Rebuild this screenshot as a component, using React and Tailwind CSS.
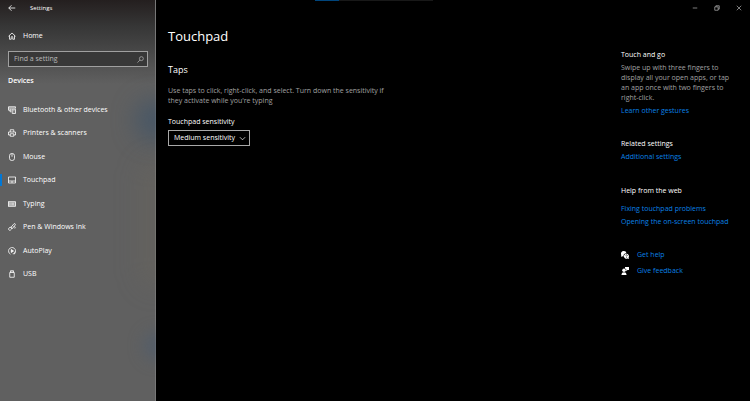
import { useState } from 'react';

const icons = {
  back: <path d="M14.500 8h-13M7 2.500 1.500 8 7 13.500" />,
  home: <path d="M1 8.500 8 2l7 6.500M3 7v7.500h3.500v-4a1.500 1.500 0 0 1 3 0v4H13V7" />,
  search: (
    <>
      <circle cx="10" cy="6" r="4.500" />
      <path d="M6.800 9.200 1 15" />
    </>
  ),
  devices: (
    <>
      <path d="M7 8.500H1v-7h14V5M1 4h13M3 6.500h4M4 8.500v3h3" />
      <path d="M8.500 6.500H15v8.500H8.500zM10.500 9.500h2.500M11.800 11.500v1.500" />
    </>
  ),
  printer: (
    <>
      <path d="M4.500 6V1.500h7V6M4.500 12H1V6h14v6h-3.500" />
      <path d="M4.500 9.500h7v5h-7z" />
    </>
  ),
  mouse: (
    <>
      <rect x="3" y="1" width="10" height="14" rx="4.500" />
      <path d="M8 1v6.500" />
    </>
  ),
  touchpad: <path d="M1 2h14v12H1zM1 10h14M8 10v4" />,
  keyboard: (
    <>
      <rect x="1" y="3.500" width="14" height="9" fill="currentColor" fillOpacity=".4" />
      <path d="M3 6.500h10M3 9.500h10" strokeDasharray="1.500 1" />
    </>
  ),
  pen: (
    <>
      <path d="m6 8.500 6-7c1.500-1 3.500.5 2.500 2.500l-6 7zM6 8.500l2.500 2.500" />
      <path d="M6 8.500C3 8 0 11 1.500 13.500S7 14 7.500 10M11 8c3-2 4.500.5 2.500 3" />
    </>
  ),
  autoplay: (
    <>
      <path d="M5 14.300A7 7 0 1 1 13 13M13.500 9.500v4H9.500" />
      <path d="M6.500 5v6L11 8z" fill="currentColor" />
    </>
  ),
  usb: (
    <>
      <path d="M5 5V1.500h6V5M3.500 5h9v9.500h-9z" />
      <path d="M7 3v.8M9 3v.8" />
    </>
  ),
  chevron: <path d="m2 5 6 6 6-6" />,
  minimize: <path d="M2 8h12" />,
  restore: <path d="M2 5h9v9H2zM5 5V2h9v9h-3" />,
  close: <path d="m2 2 12 12M14 2 2 14" />,
};

const Icon = ({ name, className = 'size-2' }) => (
  <svg
    viewBox="0 0 16 16"
    className={`shrink-0 ${className}`}
    fill="none"
    stroke="currentColor"
    strokeWidth="1.600"
    aria-hidden="true"
  >
    {icons[name]}
  </svg>
);

const HelpIcon = () => (
  <svg viewBox="0 0 16 16" className="size-2 shrink-0" fill="white" aria-hidden="true">
    <path d="M5.500 0a5.500 5.500 0 0 0-5 8L0 11.500 3.500 10.500A5 5 0 0 0 5 11 6 6 0 0 1 11 4.500 5.500 5.500 0 0 0 5.500 0Z" />
    <path d="M11 5.500a5 5 0 1 0 2 9.500l3 1-.8-3A5 5 0 0 0 11 5.500Z" />
    <path d="M9.500 9q0-1.500 1.500-1.500t1.500 1.500q0 1-1.500 2M11 12.500V14" fill="none" stroke="black" strokeWidth="1.200" />
  </svg>
);

const FeedbackIcon = () => (
  <svg viewBox="0 0 16 16" className="size-2 shrink-0" fill="white" aria-hidden="true">
    <circle cx="6" cy="6.500" r="3.500" />
    <path d="M1 16v-1q0-4.500 5-4.500t5 4.500v1zM8 0h8v6h-3l-2.500 2.500V4.500L8 3z" />
  </svg>
);

const devices = [
  { label: 'Bluetooth & other devices', icon: 'devices' },
  { label: 'Printers & scanners', icon: 'printer' },
  { label: 'Mouse', icon: 'mouse' },
  { label: 'Touchpad', icon: 'touchpad' },
  { label: 'Typing', icon: 'keyboard' },
  { label: 'Pen & Windows Ink', icon: 'pen' },
  { label: 'AutoPlay', icon: 'autoplay' },
  { label: 'USB', icon: 'usb' },
];

const Sidebar = () => {
  const [active, setActive] = useState('Touchpad');

  return (
    <aside className="relative w-[156px] shrink-0 overflow-hidden bg-linear-to-b from-[#241f1f] from-0% via-[#363636] via-[26px] to-[#606060] to-[84px] shadow-[inset_-1px_0_#777777]">
      {/* Wallpaper showing through the acrylic */}
      <div className="absolute top-[100px] -right-5 size-10 rounded-full bg-[#35506a]/60 blur-md"></div>
      <div className="absolute top-[160px] -right-4 h-32 w-8 rounded-full bg-[#6c675b]/30 blur-md"></div>
      <div className="absolute top-[332px] -right-4 size-7 rounded-full bg-[#4b5b70]/60 blur-sm"></div>

      <div className="relative">
        <div className="flex h-4 items-center gap-[14px] px-2 text-[6px]">
          <button type="button" aria-label="Back">
            <Icon name="back" />
          </button>
          <span>Settings</span>
        </div>

        <a href="#home" className="mt-3 flex h-4 items-center gap-[7px] px-2">
          <Icon name="home" />
          Home
        </a>

        <div className="mx-2 mt-[7px] flex h-4 items-center border border-[#a0a0a0] bg-[#383838] pr-[3px] pl-[5px]">
          <input
            type="search"
            aria-label="Find a setting"
            placeholder="Find a setting"
            className="min-w-0 flex-1 bg-transparent outline-none placeholder:text-[#b8b8b8]"
          />
          <Icon name="search" className="size-[7px] text-[#b8b8b8]" />
        </div>

        <h2 className="mt-[9px] px-2 font-semibold">Devices</h2>

        <nav className="mt-4 flex h-45 flex-col justify-between">
          {devices.map((item) => (
            <a
              key={item.label}
              href="#device"
              onClick={() => setActive(item.label)}
              className="flex h-4 items-center"
            >
              <span className={`h-3 w-[2px] ${active === item.label ? 'bg-[#0078d7]' : ''}`}></span>
              <span className="flex items-center gap-[7px] px-[6px]">
                <Icon name={item.icon} />
                {item.label}
              </span>
            </a>
          ))}
        </nav>
      </div>
    </aside>
  );
};

const App = () => {
  return (
    <div className="relative flex min-h-screen bg-black font-['Open_Sans','Noto_Sans',sans-serif] text-[7px] leading-[10px] text-white">
      <Sidebar />

      {/* Progress strip along the top edge */}
      <div className="absolute top-0 left-[42%] flex h-px w-[118px] bg-[#181818]">
        <div className="w-6 bg-[#00457c]"></div>
      </div>

      <div className="flex flex-1 flex-col">
        <div className="flex h-4 items-center justify-end gap-4 px-2 text-[#d0d0d0]">
          <button type="button" aria-label="Minimize">
            <Icon name="minimize" className="size-[6px]" />
          </button>
          <button type="button" aria-label="Restore">
            <Icon name="restore" className="size-[6px]" />
          </button>
          <button type="button" aria-label="Close">
            <Icon name="close" className="size-[6px]" />
          </button>
        </div>

        <div className="flex flex-1 justify-between pl-3">
          <main className="w-[220px] pt-3">
            <h1 className="text-[13px] leading-4">Touchpad</h1>
            <h2 className="mt-5 text-[9px] leading-3">Taps</h2>
            <p className="mt-[10px] text-[#a0a0a0]">
              Use taps to click, right-click, and select. Turn down the sensitivity if they activate while you're typing
            </p>
            <label htmlFor="sensitivity" className="mt-[11px] block">
              Touchpad sensitivity
            </label>
            <div className="relative mt-[3px] w-[82px]">
              <select
                id="sensitivity"
                defaultValue="medium"
                className="h-4 w-full appearance-none border border-[#a8a8a8] bg-black pl-[5px] text-white"
              >
                <option value="most">Most sensitive</option>
                <option value="high">High sensitivity</option>
                <option value="medium">Medium sensitivity</option>
                <option value="low">Low sensitivity</option>
              </select>
              <Icon name="chevron" className="pointer-events-none absolute top-[5px] right-1 size-[7px]" />
            </div>
          </main>

          <aside className="w-[129px] pt-[34px] pr-4">
            <section>
              <h3>Touch and go</h3>
              <p className="mt-[3px] text-[#a0a0a0]">
                Swipe up with three fingers to display all your open apps, or tap an app once with two fingers to
                right-click.
              </p>
              <a href="#gestures" className="mt-[3px] block text-[#0a82e6]">Learn other gestures</a>
            </section>

            <section className="mt-[23px]">
              <h3>Related settings</h3>
              <a href="#additional" className="mt-[3px] block text-[#0a82e6]">Additional settings</a>
            </section>

            <section className="mt-6 whitespace-nowrap">
              <h3>Help from the web</h3>
              <a href="#fixing" className="mt-2 block text-[#0a82e6]">Fixing touchpad problems</a>
              <a href="#opening" className="mt-[3px] block text-[#0a82e6]">Opening the on-screen touchpad</a>
            </section>

            <div className="mt-[23px] flex flex-col gap-[6px]">
              <a href="#help" className="flex items-center gap-2 text-[#0a82e6]">
                <HelpIcon />
                Get help
              </a>
              <a href="#feedback" className="flex items-center gap-2 text-[#0a82e6]">
                <FeedbackIcon />
                Give feedback
              </a>
            </div>
          </aside>
        </div>
      </div>
    </div>
  );
};

export default App;
